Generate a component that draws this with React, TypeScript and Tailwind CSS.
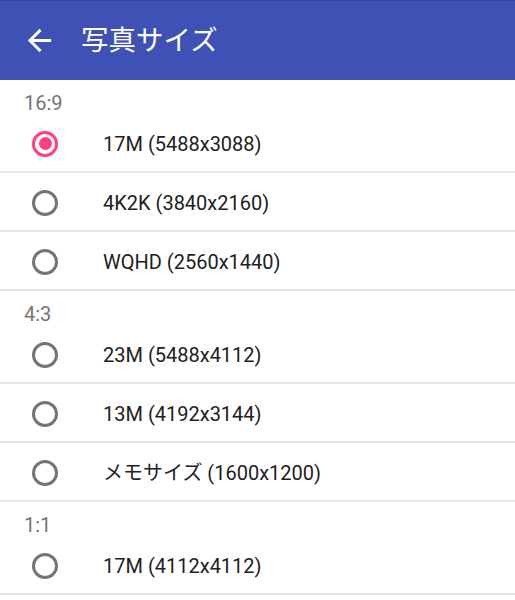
import { useState } from 'react';

interface Group {
  label: string;
  items: string[];
}

const groups: Group[] = [
  { label: '16:9', items: ['17M (5488x3088)', '4K2K (3840x2160)', 'WQHD (2560x1440)'] },
  { label: '4:3', items: ['23M (5488x4112)', '13M (4192x3144)', 'メモサイズ (1600x1200)'] },
  { label: '1:1', items: ['17M (4112x4112)'] },
];

function Radio({ checked }: { checked: boolean }) {
  return (
    <span
      className={`w-[26px] h-[26px] rounded-full border-[3px] flex items-center justify-center shrink-0 ${
        checked ? 'border-[#ff4081]' : 'border-[#757575]'
      }`}
    >
      {checked && <span className="w-[13px] h-[13px] rounded-full bg-[#ff4081]" />}
    </span>
  );
}

export default function App() {
  const [selected, setSelected] = useState('16:9-0');

  return (
    <div
      className="w-[515px] h-[600px] overflow-hidden bg-white"
      style={{ fontFamily: 'Roboto, "Noto Sans CJK JP", sans-serif' }}
    >
      {/* Toolbar */}
      <div className="h-[80px] bg-[#3f51b5] border-t border-[#3646a0] flex items-center text-white">
        <svg className="ml-[22px] w-[35px] h-[35px]" viewBox="0 0 24 24" fill="currentColor">
          <path d="M20 11H7.83l5.59-5.59L12 4l-8 8 8 8 1.41-1.41L7.83 13H20v-2z" />
        </svg>
        <h1 className="ml-[24px] text-[27.5px] leading-none">写真サイズ</h1>
      </div>

      {groups.map((g) => (
        <div key={g.label}>
          <div className="h-[34px] pt-[12px] pl-[24px] text-[20px] leading-[22px] text-[#757575]">
            {g.label}
          </div>
          {g.items.map((item, i) => {
            const key = `${g.label}-${i}`;
            return (
              <div
                key={key}
                className="h-[59px] pt-[2px] flex items-center border-b-[2px] border-[#e6e6e6] cursor-pointer"
                onClick={() => setSelected(key)}
              >
                <div className="w-[103px] pl-[32px] flex items-center">
                  <Radio checked={selected === key} />
                </div>
                <span className="text-[20px] text-[#212121]">{item}</span>
              </div>
            );
          })}
        </div>
      ))}
    </div>
  );
}
